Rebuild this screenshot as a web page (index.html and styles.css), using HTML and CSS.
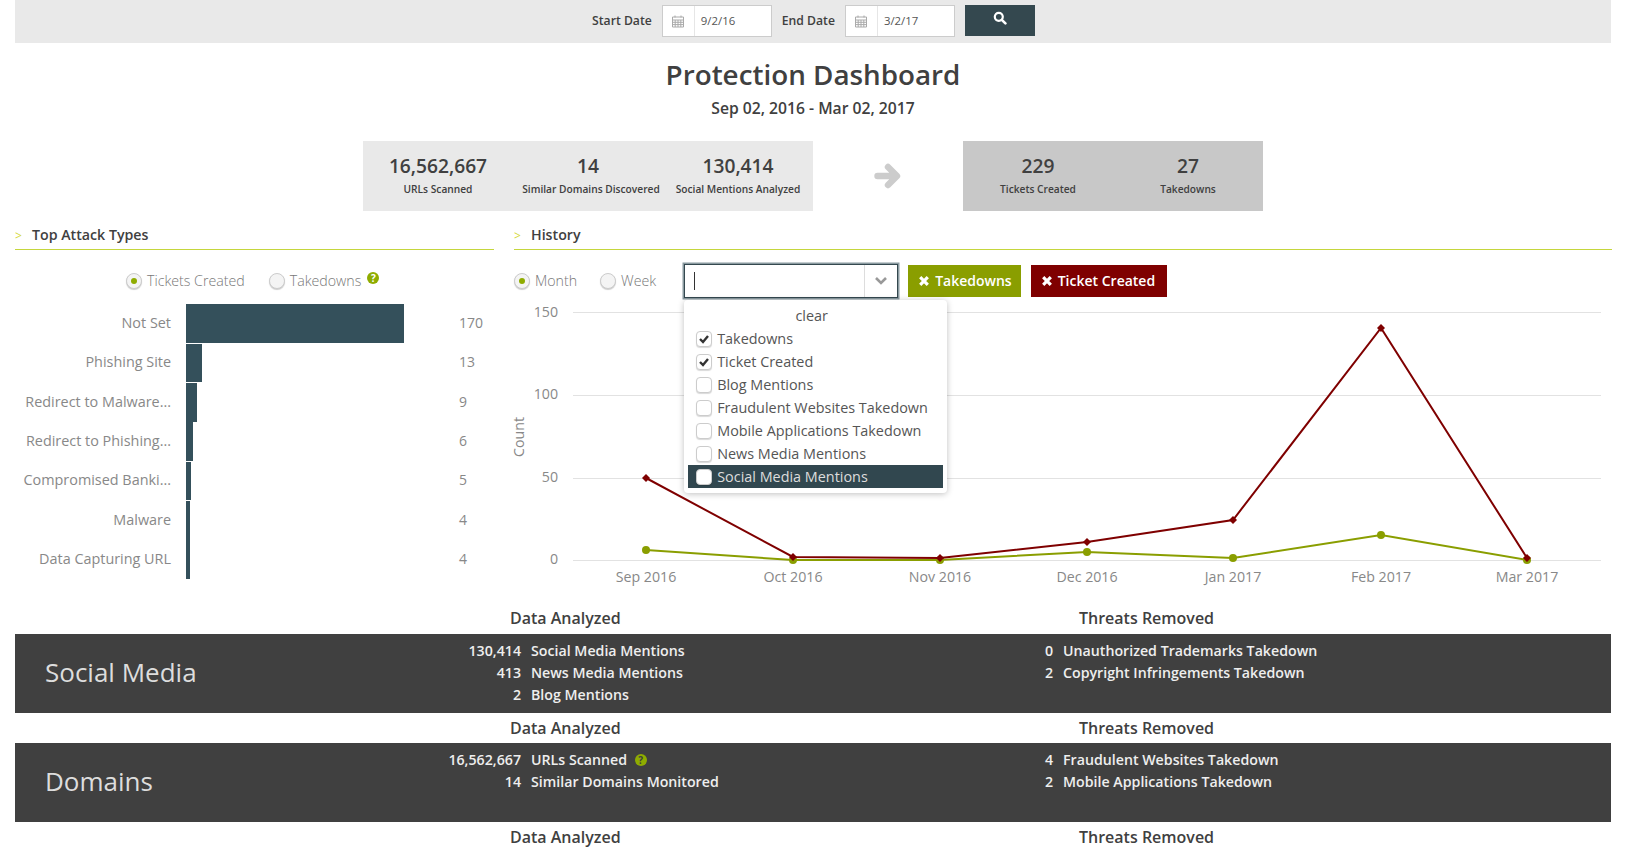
FILE: index.html

```html
<!DOCTYPE html>
<html lang="en">
<head>
  <meta charset="UTF-8" />
  <title>Protection Dashboard</title>
  <link rel="stylesheet" href="styles.css">
</head>
<body>
  <div class="datebar">
    <label>Start Date</label>
    <div class="dateinput">
      <span class="cal"><svg width="14" height="14" viewBox="0 0 14 14"><path d="M1.5 3h11v10h-11zM1.5 6h11M1.5 8.3h11M1.5 10.6h11M4.2 6v7M7 6v7M9.8 6v7M4 1.5v2M10 1.5v2" fill="none" stroke="#aaa" stroke-width="1"/></svg></span>
      <span class="dateval">9/2/16</span>
    </div>
    <label>End Date</label>
    <div class="dateinput">
      <span class="cal"><svg width="14" height="14" viewBox="0 0 14 14"><path d="M1.5 3h11v10h-11zM1.5 6h11M1.5 8.3h11M1.5 10.6h11M4.2 6v7M7 6v7M9.8 6v7M4 1.5v2M10 1.5v2" fill="none" stroke="#aaa" stroke-width="1"/></svg></span>
      <span class="dateval">3/2/17</span>
    </div>
    <button class="searchbtn"><svg width="14" height="14" viewBox="0 0 14 14"><circle cx="5.8" cy="5.8" r="4" fill="none" stroke="#fff" stroke-width="2.2"/><path d="M8.8 8.8l3.6 3.6" stroke="#fff" stroke-width="2.6" stroke-linecap="round"/></svg></button>
  </div>

  <h1>Protection Dashboard</h1>
  <p class="range">Sep 02, 2016 - Mar 02, 2017</p>

  <div class="stats">
    <div class="statbox">
      <div class="stat"><b>16,562,667</b><span>URLs Scanned</span></div>
      <div class="stat"><b>14</b><span class="nudge">Similar Domains Discovered</span></div>
      <div class="stat"><b>130,414</b><span>Social Mentions Analyzed</span></div>
    </div>
    <div class="statarrow"><svg width="28" height="28" viewBox="0 0 28 28"><path d="M3.5 14h18M14 5l9 9-9 9" fill="none" stroke="#ccc" stroke-width="6.4" stroke-linejoin="round" stroke-linecap="round"/></svg></div>
    <div class="statbox dark">
      <div class="stat"><b>229</b><span>Tickets Created</span></div>
      <div class="stat"><b>27</b><span>Takedowns</span></div>
    </div>
  </div>

  <div class="main">
    <div class="attacks">
      <h2 class="sechead"><i>&gt;</i>Top Attack Types</h2>
      <div class="radios">
        <span class="radio on"></span><span class="rlabel">Tickets Created</span>
        <span class="radio second"></span><span class="rlabel">Takedowns</span>
        <span class="help">?</span>
      </div>
      <div class="bars">
        <div class="barrow"><span class="blabel">Not Set</span><div class="btrack"><div class="bar" style="width:218px"></div></div><span class="bval">170</span></div>
        <div class="barrow"><span class="blabel">Phishing Site</span><div class="btrack"><div class="bar" style="width:16px"></div></div><span class="bval">13</span></div>
        <div class="barrow"><span class="blabel">Redirect to Malware...</span><div class="btrack"><div class="bar" style="width:11px"></div></div><span class="bval">9</span></div>
        <div class="barrow"><span class="blabel">Redirect to Phishing...</span><div class="btrack"><div class="bar" style="width:7px"></div></div><span class="bval">6</span></div>
        <div class="barrow"><span class="blabel">Compromised Banki...</span><div class="btrack"><div class="bar" style="width:5px"></div></div><span class="bval">5</span></div>
        <div class="barrow"><span class="blabel">Malware</span><div class="btrack"><div class="bar" style="width:4px"></div></div><span class="bval">4</span></div>
        <div class="barrow"><span class="blabel">Data Capturing URL</span><div class="btrack"><div class="bar" style="width:4px"></div></div><span class="bval">4</span></div>
      </div>
    </div>

    <div class="history">
      <h2 class="sechead"><i>&gt;</i>History</h2>
      <div class="toolbar">
        <span class="radio on"></span><span class="rlabel">Month</span>
        <span class="radio week"></span><span class="rlabel">Week</span>
        <div class="selectwrap">
          <div class="selectbox">
            <span class="caret"></span>
            <span class="selarrow"><svg width="14" height="10" viewBox="0 0 14 10"><path d="M2 2l5 5 5-5" fill="none" stroke="#999" stroke-width="2.6"/></svg></span>
          </div>
          <div class="dropdown">
            <div class="clear">clear</div>
            <div class="opt"><span class="check on"><svg width="12" height="12" viewBox="0 0 12 12"><path d="M2 6l3 3 5-6" fill="none" stroke="#333" stroke-width="2.4"/></svg></span>Takedowns</div>
            <div class="opt"><span class="check on"><svg width="12" height="12" viewBox="0 0 12 12"><path d="M2 6l3 3 5-6" fill="none" stroke="#333" stroke-width="2.4"/></svg></span>Ticket Created</div>
            <div class="opt"><span class="check"></span>Blog Mentions</div>
            <div class="opt"><span class="check"></span>Fraudulent Websites Takedown</div>
            <div class="opt"><span class="check"></span>Mobile Applications Takedown</div>
            <div class="opt"><span class="check"></span>News Media Mentions</div>
            <div class="opt active"><span class="check"></span>Social Media Mentions</div>
          </div>
        </div>
        <span class="tag green"><svg width="12" height="12" viewBox="0 0 12 12"><path d="M2.2 2.2l7.6 7.6M9.8 2.2l-7.6 7.6" stroke="#fff" stroke-width="3.2"/></svg>Takedowns</span>
        <span class="tag red"><svg width="12" height="12" viewBox="0 0 12 12"><path d="M2.2 2.2l7.6 7.6M9.8 2.2l-7.6 7.6" stroke="#fff" stroke-width="3.2"/></svg>Ticket Created</span>
      </div>
      <svg class="chart" width="1098" height="290" viewBox="0 0 1098 290">
        <g stroke="#e2e2e2" stroke-width="1">
          <path d="M59 12.5h1028M59 95.5h1028M59 178.5h1028M59 260.5h1028"/>
        </g>
        <g text-anchor="end">
          <text x="44" y="17">150</text>
          <text x="44" y="99">100</text>
          <text x="44" y="182">50</text>
          <text x="44" y="264">0</text>
        </g>
        <text transform="translate(10 137) rotate(-90)" text-anchor="middle">Count</text>
        <g text-anchor="middle">
          <text x="132" y="282">Sep 2016</text>
          <text x="279" y="282">Oct 2016</text>
          <text x="426" y="282">Nov 2016</text>
          <text x="573" y="282">Dec 2016</text>
          <text x="719" y="282">Jan 2017</text>
          <text x="867" y="282">Feb 2017</text>
          <text x="1013" y="282">Mar 2017</text>
        </g>
        <polyline points="132,250 279,260 426,260 573,252 719,258 867,235 1013,260" fill="none" stroke="#8a9e00" stroke-width="2"/>
        <g fill="#8a9e00">
          <circle cx="132" cy="250" r="4"/><circle cx="279" cy="260" r="4"/><circle cx="426" cy="260" r="4"/><circle cx="573" cy="252" r="4"/><circle cx="719" cy="258" r="4"/><circle cx="867" cy="235" r="4"/><circle cx="1013" cy="260" r="4"/>
        </g>
        <polyline points="132,178 279,257 426,258 573,242 719,220 867,28 1013,258" fill="none" stroke="#7f0000" stroke-width="2"/>
        <g fill="#7f0000">
          <path d="M132 174l4 4-4 4-4-4zM279 253l4 4-4 4-4-4zM426 254l4 4-4 4-4-4zM573 238l4 4-4 4-4-4zM719 216l4 4-4 4-4-4zM867 24l4 4-4 4-4-4zM1013 254l4 4-4 4-4-4z"/>
        </g>
      </svg>
    </div>
  </div>

  <div class="sumhead first"><span>Data Analyzed</span><span>Threats Removed</span></div>
  <div class="band">
    <div class="bandtitle">Social Media</div>
    <div class="bandcol">
      <div class="line"><span>130,414</span><span>Social Media Mentions</span></div>
      <div class="line"><span>413</span><span>News Media Mentions</span></div>
      <div class="line"><span>2</span><span>Blog Mentions</span></div>
    </div>
    <div class="bandcol">
      <div class="line"><span>0</span><span>Unauthorized Trademarks Takedown</span></div>
      <div class="line"><span>2</span><span>Copyright Infringements Takedown</span></div>
    </div>
  </div>
  <div class="sumhead"><span>Data Analyzed</span><span>Threats Removed</span></div>
  <div class="band">
    <div class="bandtitle">Domains</div>
    <div class="bandcol">
      <div class="line"><span>16,562,667</span><span>URLs Scanned <em class="help small">?</em></span></div>
      <div class="line"><span>14</span><span>Similar Domains Monitored</span></div>
    </div>
    <div class="bandcol">
      <div class="line"><span>4</span><span>Fraudulent Websites Takedown</span></div>
      <div class="line"><span>2</span><span>Mobile Applications Takedown</span></div>
    </div>
  </div>
  <div class="sumhead"><span>Data Analyzed</span><span>Threats Removed</span></div>
</body>
</html>
```

FILE: styles.css

```css
html, body {
  margin: 0;
  padding: 0;
}
body {
  font-family: 'Open Sans', sans-serif;
  font-size: 14px;
  color: #404040;
  background: #fff;
  padding: 0 15px;
  height: 848px;
  box-sizing: border-box;
  overflow: hidden;
}
.datebar {
  display: flex;
  justify-content: center;
  align-items: flex-start;
  height: 43px;
  background: #e9e9e9;
  padding: 5px 0 0 1px;
  box-sizing: border-box;
}
.datebar label {
  font-size: 12.2px;
  font-weight: 600;
  line-height: 32px;
  margin-right: 10px;
}
.dateinput {
  display: flex;
  width: 110px;
  height: 32px;
  box-sizing: border-box;
  border: 1px solid #ccc;
  background: #fff;
  margin-right: 10px;
}
.cal {
  width: 31px;
  display: flex;
  align-items: center;
  justify-content: center;
  border-right: 1px solid #e6e6e6;
}
.dateval {
  font-size: 11.4px;
  line-height: 30px;
  padding-left: 6px;
  color: #555;
}
.searchbtn {
  width: 70px;
  height: 31px;
  background: #34484f;
  border: none;
  padding: 0 0 3px;
}
h1 {
  font-size: 27.8px;
  font-weight: 600;
  line-height: 38px;
  text-align: center;
  margin: 12px 0 0;
}
.range {
  font-size: 15.7px;
  font-weight: 600;
  line-height: 22px;
  text-align: center;
  margin: 4px 0 0;
}
.stats {
  display: flex;
  justify-content: center;
  margin-top: 22px;
}
.statbox {
  display: flex;
  height: 70px;
  background: #e9e9e9;
}
.statbox.dark {
  background: #c8c8c8;
}
.stat {
  width: 150px;
  text-align: center;
  padding-top: 12px;
  box-sizing: border-box;
}
.stat b {
  display: block;
  font-size: 19.2px;
  font-weight: 600;
  line-height: 26px;
}
.stat span {
  display: block;
  font-size: 10.2px;
  font-weight: 600;
  line-height: 20px;
  white-space: nowrap;
}
.stat span.nudge {
  padding-left: 6px;
}
.statarrow {
  width: 150px;
  display: flex;
  align-items: center;
  justify-content: center;
}
.main {
  display: grid;
  grid-template-columns: 479px 1fr;
  column-gap: 20px;
  margin-top: 12px;
  margin-bottom: 18px;
}
.sechead {
  font-size: 14.2px;
  font-weight: 600;
  line-height: 24px;
  height: 26px;
  margin: 0;
  border-bottom: 1px solid #c5d63d;
}
.sechead i {
  font-style: normal;
  font-weight: 400;
  color: #d4d83a;
  display: inline-block;
  width: 17px;
  font-size: 12px;
}
.radios {
  display: flex;
  align-items: center;
  height: 34px;
  margin-top: 14px;
  padding-left: 111px;
}
.radio {
  width: 14px;
  height: 14px;
  border-radius: 50%;
  border: 1px solid #ccc;
  background: #f4f4f4;
  box-shadow: 0 1px 1px rgba(0,0,0,0.2);
  margin-right: 5px;
  flex: none;
  display: flex;
  align-items: center;
  justify-content: center;
}
.radio.on::after {
  content: "";
  width: 6px;
  height: 6px;
  border-radius: 50%;
  background: #8fac00;
}
.radio.second {
  margin-left: 24px;
}
.rlabel {
  color: #777;
  font-size: 14.2px;
  font-weight: 300;
  padding-bottom: 1px;
}
.help {
  display: inline-block;
  width: 12px;
  height: 12px;
  border-radius: 50%;
  background: #8fac00;
  color: #fff;
  font-size: 10px;
  font-weight: 700;
  font-style: normal;
  line-height: 12px;
  text-align: center;
  margin: -6px 0 0 6px;
}
.help.small {
  margin: 0 0 0 4px;
  vertical-align: 1px;
  color: #404040;
}
.bars {
  margin-top: 6px;
}
.barrow {
  display: grid;
  grid-template-columns: 156px 1fr 35px;
  column-gap: 15px;
  height: 39.33px;
  align-items: center;
}
.blabel {
  text-align: right;
  color: #888;
  font-size: 14.4px;
  white-space: nowrap;
  padding-bottom: 2px;
}
.btrack {
  height: 38.5px;
}
.bar {
  height: 100%;
  background: #34505b;
}
.bval {
  color: #888;
  padding-bottom: 2px;
}
.toolbar {
  display: flex;
  align-items: center;
  height: 34px;
  margin-top: 14px;
}
.radio.week {
  margin-left: 23px;
}
.selectwrap {
  position: relative;
  margin-left: 28px;
  margin-right: 10px;
}
.selectbox {
  width: 214px;
  height: 34px;
  box-sizing: border-box;
  border: 1px solid #34484f;
  box-shadow: 0 0 0 1.5px #8a9aa0;
  background: #fff;
  display: flex;
  align-items: center;
  justify-content: space-between;
}
.caret {
  width: 1px;
  height: 18px;
  background: #333;
  margin-left: 9px;
}
.selarrow {
  width: 32px;
  height: 100%;
  border-left: 1px solid #ddd;
  display: flex;
  align-items: center;
  justify-content: center;
}
.dropdown {
  position: absolute;
  top: 36px;
  left: 0;
  width: 263px;
  height: 193px;
  box-sizing: border-box;
  background: #fff;
  border-radius: 4px;
  box-shadow: 0 1px 6px rgba(0,0,0,0.25);
  padding: 5px 4px;
  z-index: 5;
  font-size: 14.4px;
}
.clear {
  text-align: center;
  line-height: 22px;
  color: #555;
  padding-right: 8px;
}
.opt {
  display: flex;
  align-items: center;
  height: 23px;
  color: #555;
  padding-left: 8px;
}
.opt.active {
  background: #31474f;
  color: #ddd;
}
.check {
  width: 14px;
  height: 14px;
  border: 1px solid #ccc;
  border-radius: 4px;
  background: #fff;
  box-shadow: 0 1px 1px rgba(0,0,0,0.15);
  margin-right: 5px;
  display: flex;
  align-items: center;
  justify-content: center;
}
.tag {
  display: flex;
  align-items: center;
  height: 32px;
  padding: 0 10px 2px;
  box-sizing: border-box;
  color: #fff;
  font-weight: 600;
  margin-right: 10px;
  white-space: nowrap;
}
.tag svg {
  margin: 2px 5px 0 0;
}
.tag.green {
  background: #8a9e00;
  padding-right: 9px;
}
.tag.red {
  background: #7f0000;
  padding-right: 12px;
}
.chart {
  display: block;
  margin-top: 2px;
  font-size: 14.2px;
  fill: #888;
  overflow: visible;
}
.chart text {
  stroke: none;
}
.sumhead {
  display: grid;
  grid-template-columns: 569px 1fr;
  padding-left: 495px;
  font-size: 16px;
  font-weight: 600;
  line-height: 20px;
  margin: 5px 0;
}
.sumhead.first {
  margin-bottom: 6px;
}
.band {
  display: grid;
  grid-template-columns: 386px 532px 1fr;
  height: 79px;
  background: #404040;
  color: #eee;
}
.bandtitle {
  font-size: 26px;
  font-weight: 400;
  color: #ddd;
  padding-left: 30px;
  line-height: 77px;
}
.bandcol {
  padding-top: 6px;
}
.line {
  display: grid;
  grid-template-columns: 120px 1fr;
  column-gap: 10px;
  font-size: 14.2px;
  line-height: 22px;
  font-weight: 600;
}
.line span:first-child {
  text-align: right;
}
```
